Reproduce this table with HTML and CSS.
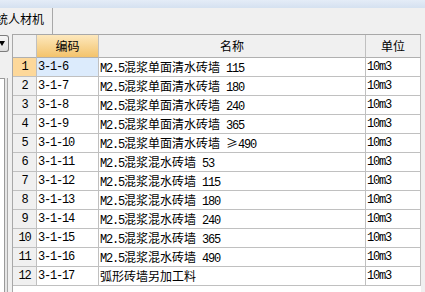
FILE: index.html
```html
<!DOCTYPE html>
<html>
<head>
<meta charset="utf-8">
<link rel="stylesheet" href="styles.css">
</head>
<body>
<div class="topband"></div>
<div class="tabbar"><div class="tab">统人材机</div></div>
<div class="main">
  <div class="side">
    <div class="combo"><span class="arrow"></span></div>
    <div class="tree"></div>
  </div>
  <div class="grid">
    <div class="row head">
      <div class="cell c0"></div>
      <div class="cell c1 hsel"><span class="c">编码</span></div>
      <div class="cell c2"><span class="c">名称</span></div>
      <div class="cell c3"><span class="c">单位</span></div>
    </div>
    <div class="row"><div class="cell c0 rsel">1</div><div class="cell c1 csel">3-1-6</div><div class="cell c2">M2.5<span class="c">混浆单面清水砖墙</span> 115</div><div class="cell c3">10m3</div></div>
    <div class="row"><div class="cell c0">2</div><div class="cell c1">3-1-7</div><div class="cell c2">M2.5<span class="c">混浆单面清水砖墙</span> 180</div><div class="cell c3">10m3</div></div>
    <div class="row"><div class="cell c0">3</div><div class="cell c1">3-1-8</div><div class="cell c2">M2.5<span class="c">混浆单面清水砖墙</span> 240</div><div class="cell c3">10m3</div></div>
    <div class="row"><div class="cell c0">4</div><div class="cell c1">3-1-9</div><div class="cell c2">M2.5<span class="c">混浆单面清水砖墙</span> 365</div><div class="cell c3">10m3</div></div>
    <div class="row"><div class="cell c0">5</div><div class="cell c1">3-1-10</div><div class="cell c2">M2.5<span class="c">混浆单面清水砖墙</span> <span class="c">≥</span>490</div><div class="cell c3">10m3</div></div>
    <div class="row"><div class="cell c0">6</div><div class="cell c1">3-1-11</div><div class="cell c2">M2.5<span class="c">混浆混水砖墙</span> 53</div><div class="cell c3">10m3</div></div>
    <div class="row"><div class="cell c0">7</div><div class="cell c1">3-1-12</div><div class="cell c2">M2.5<span class="c">混浆混水砖墙</span> 115</div><div class="cell c3">10m3</div></div>
    <div class="row"><div class="cell c0">8</div><div class="cell c1">3-1-13</div><div class="cell c2">M2.5<span class="c">混浆混水砖墙</span> 180</div><div class="cell c3">10m3</div></div>
    <div class="row"><div class="cell c0">9</div><div class="cell c1">3-1-14</div><div class="cell c2">M2.5<span class="c">混浆混水砖墙</span> 240</div><div class="cell c3">10m3</div></div>
    <div class="row"><div class="cell c0">10</div><div class="cell c1">3-1-15</div><div class="cell c2">M2.5<span class="c">混浆混水砖墙</span> 365</div><div class="cell c3">10m3</div></div>
    <div class="row"><div class="cell c0">11</div><div class="cell c1">3-1-16</div><div class="cell c2">M2.5<span class="c">混浆混水砖墙</span> 490</div><div class="cell c3">10m3</div></div>
    <div class="row"><div class="cell c0">12</div><div class="cell c1">3-1-17</div><div class="cell c2"><span class="c">弧形砖墙另加工料</span></div><div class="cell c3">10m3</div></div>
  </div>
  <div class="rest"></div>
</div>
</body>
</html>
```
FILE: styles.css
```css
html, body {
  margin: 0;
  padding: 0;
}
body {
  width: 425px;
  height: 292px;
  overflow: hidden;
  background: #f0f0f0;
  font-family: "Liberation Mono", monospace;
  color: #000;
}
.topband {
  height: 8px;
  background: linear-gradient(#e4ecf7, #d5e1f0);
}
.tabbar {
  height: 26px;
  display: flex;
  background: #f0f0f0;
}
.tab {
  margin-left: -4px;
  padding: 0 8px 4px 0;
  line-height: 22px;
  font-family: "Noto Sans CJK SC", sans-serif;
  font-size: 12px;
  border-right: 1px solid #a8a8a8;
}
.main {
  display: flex;
  height: 258px;
}
.side {
  width: 12px;
  display: flex;
  flex-direction: column;
}
.combo {
  margin-top: 1px;
  width: 8px;
  height: 15px;
  border: 1px solid #7d7d7d;
  border-left: 0;
  border-radius: 0 3px 3px 0;
  background: linear-gradient(#f6f6f6, #dedede);
  display: flex;
  align-items: center;
}
.arrow {
  width: 0;
  height: 0;
  border-top: 5px solid #000;
  border-left: 3px solid transparent;
  border-right: 3px solid transparent;
  margin-left: -1px;
}
.tree {
  margin-top: 26px;
  flex: 1;
  width: 4px;
  border: 1px solid #9a9a9a;
  border-left: 0;
  border-bottom: 0;
  background: #fff;
  box-shadow: 2px 0 0 #e6e6e6, 3px 0 0 #a8a8a8;
}
.grid {
  width: 408px;
  border-left: 1px solid #a8a8a8;
  border-top: 1px solid #a8a8a8;
  background: #fff;
}
.rest {
  flex: 1;
  background: #f0f0f0;
}
.row {
  display: flex;
  height: 19px;
}
.row.head {
  height: 23px;
  background: #f0f0f0;
}
.cell {
  box-sizing: border-box;
  border-right: 1px solid #c0c0c0;
  border-bottom: 1px solid #c0c0c0;
  font-size: 12px;
  letter-spacing: -1.2px;
  line-height: 18px;
  white-space: nowrap;
  overflow: hidden;
  padding-left: 1px;
}
.head .cell {
  line-height: 22px;
  text-align: center;
  padding-left: 0;
  border-bottom-color: #b0b0b0;
}
.c {
  font-family: "Noto Sans CJK SC", sans-serif;
  font-size: 12px;
  letter-spacing: 0;
}
.c0 {
  width: 24px;
  background: #f0f0f0;
  text-align: center;
  padding-left: 0;
}
.c1 { width: 62px; }
.c2 { width: 267px; }
.c3 { width: 55px; }
.hsel {
  background: linear-gradient(#fde8bd, #f3c36c);
}
.rsel {
  background: #fdd89a;
}
.csel {
  background: #dcebfc;
}
```
